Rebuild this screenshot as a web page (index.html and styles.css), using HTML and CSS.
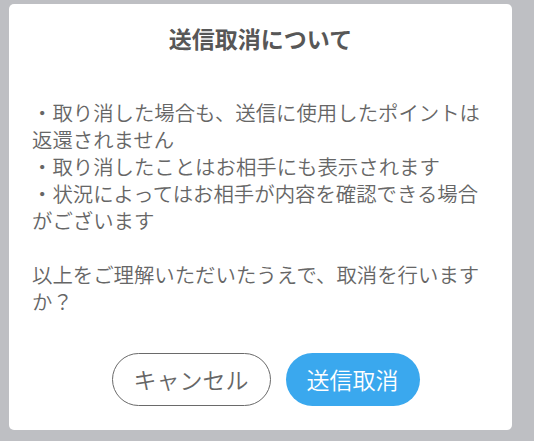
FILE: index.html
```html
<!DOCTYPE html>
<html lang="ja">
<head>
<meta charset="utf-8">
<link rel="stylesheet" href="styles.css">
</head>
<body>
<div class="dialog">
  <h1 class="title">送信取消について</h1>
  <div class="message">
    <p>・取り消した場合も、送信に使用したポイントは返還されません<br>・取り消したことはお相手にも表示されます<br>・状況によってはお相手が内容を確認できる場合がございます</p>
    <p>以上をご理解いただいたうえで、取消を行いますか？</p>
  </div>
  <div class="actions">
    <button class="btn btn-cancel">キャンセル</button>
    <button class="btn btn-submit">送信取消</button>
  </div>
</div>
</body>
</html>
```
FILE: styles.css
```css
html, body {
  margin: 0;
  padding: 0;
  background: #bebfc3;
  height: 100%;
}
body {
  padding: 4px 22px 11px 9px;
  box-sizing: border-box;
  font-family: "Noto Sans CJK JP", "Noto Sans", sans-serif;
  color: #666;
}
.dialog {
  background: #fff;
  border-radius: 5px;
  height: 426px;
  box-sizing: border-box;
  padding: 19px 23px 0 23px;
  display: flex;
  flex-direction: column;
}
.title {
  margin: 0;
  font-size: 23px;
  line-height: 30px;
  font-weight: bold;
  text-align: center;
  color: #575757;
}
.message {
  margin-top: 46px;
  font-size: 20.4px;
  line-height: 27px;
  font-weight: 350;
  color: #666;
}
.message p {
  margin: 0 0 27px 0;
}
.message p:last-child {
  margin-bottom: 0;
}
.actions {
  margin-top: 38px;
  padding-left: 10px;
  display: flex;
  justify-content: center;
  gap: 15px;
}
.btn {
  font-family: inherit;
  font-size: 23px;
  font-weight: 350;
  height: 53px;
  border-radius: 27px;
  padding: 0 21px;
  line-height: 1;
}
.btn-cancel {
  background: #fff;
  border: 1px solid #6a6a6a;
  color: #666;
}
.btn-submit {
  background: #3aa8ee;
  border: none;
  color: #fff;
}
```
